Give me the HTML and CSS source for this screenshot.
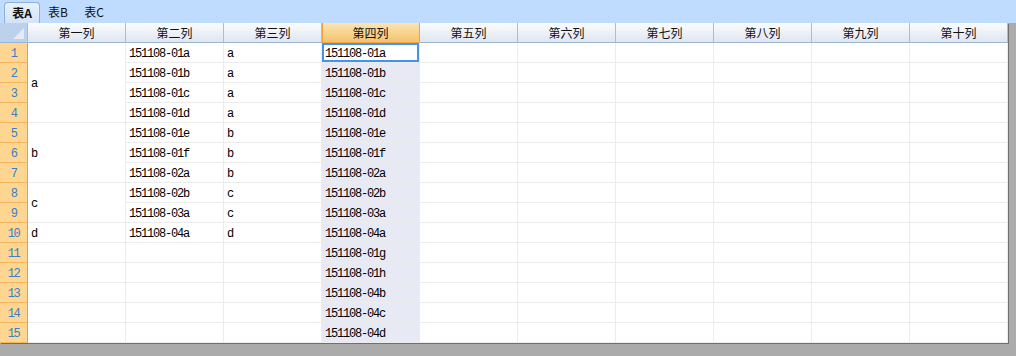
FILE: index.html
```html
<!DOCTYPE html>
<html lang="zh">

<head>
    <meta charset="UTF-8">
    <title>表格</title>
    <link rel="stylesheet" href="styles.css">
</head>

<body>
    <!-- Sheet tabs -->
    <div class="tabs">
        <span class="tab active">表A</span>
        <span class="tab">表B</span>
        <span class="tab">表C</span>
    </div>

    <div class="sheet">
        <table class="grid">
            <colgroup>
                <col class="c-head">
                <col class="c-data" span="10">
            </colgroup>
            <thead>
                <tr>
                    <th class="corner"><span class="tri"></span></th>
                    <th>第一列</th>
                    <th>第二列</th>
                    <th>第三列</th>
                    <th class="sel">第四列</th>
                    <th>第五列</th>
                    <th>第六列</th>
                    <th>第七列</th>
                    <th>第八列</th>
                    <th>第九列</th>
                    <th>第十列</th>
                </tr>
            </thead>
            <tbody>
                <tr>
                    <td class="num">1</td>
                    <td rowspan="4">a</td>
                    <td>151108-01a</td><td>a</td><td class="hl active-cell">151108-01a</td>
                    <td></td><td></td><td></td><td></td><td></td><td></td>
                </tr>
                <tr>
                    <td class="num">2</td>
                    <td>151108-01b</td><td>a</td><td class="hl">151108-01b</td>
                    <td></td><td></td><td></td><td></td><td></td><td></td>
                </tr>
                <tr>
                    <td class="num">3</td>
                    <td>151108-01c</td><td>a</td><td class="hl">151108-01c</td>
                    <td></td><td></td><td></td><td></td><td></td><td></td>
                </tr>
                <tr>
                    <td class="num">4</td>
                    <td>151108-01d</td><td>a</td><td class="hl">151108-01d</td>
                    <td></td><td></td><td></td><td></td><td></td><td></td>
                </tr>
                <tr>
                    <td class="num">5</td>
                    <td rowspan="3">b</td>
                    <td>151108-01e</td><td>b</td><td class="hl">151108-01e</td>
                    <td></td><td></td><td></td><td></td><td></td><td></td>
                </tr>
                <tr>
                    <td class="num">6</td>
                    <td>151108-01f</td><td>b</td><td class="hl">151108-01f</td>
                    <td></td><td></td><td></td><td></td><td></td><td></td>
                </tr>
                <tr>
                    <td class="num">7</td>
                    <td>151108-02a</td><td>b</td><td class="hl">151108-02a</td>
                    <td></td><td></td><td></td><td></td><td></td><td></td>
                </tr>
                <tr>
                    <td class="num">8</td>
                    <td rowspan="2">c</td>
                    <td>151108-02b</td><td>c</td><td class="hl">151108-02b</td>
                    <td></td><td></td><td></td><td></td><td></td><td></td>
                </tr>
                <tr>
                    <td class="num">9</td>
                    <td>151108-03a</td><td>c</td><td class="hl">151108-03a</td>
                    <td></td><td></td><td></td><td></td><td></td><td></td>
                </tr>
                <tr>
                    <td class="num">10</td>
                    <td>d</td>
                    <td>151108-04a</td><td>d</td><td class="hl">151108-04a</td>
                    <td></td><td></td><td></td><td></td><td></td><td></td>
                </tr>
                <tr>
                    <td class="num">11</td>
                    <td></td><td></td><td></td><td class="hl">151108-01g</td>
                    <td></td><td></td><td></td><td></td><td></td><td></td>
                </tr>
                <tr>
                    <td class="num">12</td>
                    <td></td><td></td><td></td><td class="hl">151108-01h</td>
                    <td></td><td></td><td></td><td></td><td></td><td></td>
                </tr>
                <tr>
                    <td class="num">13</td>
                    <td></td><td></td><td></td><td class="hl">151108-04b</td>
                    <td></td><td></td><td></td><td></td><td></td><td></td>
                </tr>
                <tr>
                    <td class="num">14</td>
                    <td></td><td></td><td></td><td class="hl">151108-04c</td>
                    <td></td><td></td><td></td><td></td><td></td><td></td>
                </tr>
                <tr>
                    <td class="num">15</td>
                    <td></td><td></td><td></td><td class="hl">151108-04d</td>
                    <td></td><td></td><td></td><td></td><td></td><td></td>
                </tr>
            </tbody>
        </table>
    </div>
</body>

</html>
```

FILE: styles.css
```css
/* General Styles */
* {
    margin: 0;
    padding: 0;
    box-sizing: border-box;
}

body {
    width: 1016px;
    height: 356px;
    overflow: hidden;
    background-color: #ababab;
    font-family: 'Liberation Mono', monospace;
    font-size: 12px;
    color: #000;
}

/* Sheet tabs */
.tabs {
    height: 23px;
    background-color: #bfdbfd;
    display: flex;
    align-items: flex-end;
    padding-left: 4px;
}

.tab {
    width: 36px;
    height: 21px;
    line-height: 20px;
    text-align: center;
    font-family: 'Noto Sans CJK SC', sans-serif;
    font-size: 12px;
    color: #111;
}

.tab.active {
    font-weight: bold;
    background: linear-gradient(#e9f1fb, #d3e3f8);
    border: 1px solid #8fb0da;
    border-bottom: none;
    border-radius: 4px 4px 0 0;
}

/* Grid */
.sheet {
    width: 1016px;
    height: 333px;
    background-color: #ababab;
}

.grid {
    width: 1008px;
    table-layout: fixed;
    border-collapse: separate;
    border-spacing: 0;
    background-color: #fff;
    box-shadow: 1px 1px 0 #6f6f6f;
}

.c-head {
    width: 28px;
}

.c-data {
    width: 98px;
}

.grid th,
.grid td {
    height: 20px;
    border-right: 1px solid #ececec;
    border-bottom: 1px solid #ececec;
    white-space: nowrap;
    overflow: hidden;
}

.grid th {
    font-family: 'Noto Sans CJK SC', sans-serif;
    font-weight: normal;
    font-size: 12px;
    line-height: 18px;
    color: #111;
    background: linear-gradient(#fbfcfe, #dfe6f0);
    border-right: 1px solid #a9bdd6;
    border-bottom: 1px solid #9db4d0;
}

.grid th.sel {
    background: linear-gradient(#fbe4b4, #f4c36c);
    border-right: 1px solid #f0a447;
    border-bottom: 1px solid #f0a447;
    box-shadow: inset 1px 0 0 #f0a447;
}

.grid th.corner {
    position: relative;
    background: #bcd2ec;
}

.tri {
    position: absolute;
    right: 3px;
    bottom: 3px;
    width: 0;
    height: 0;
    border-left: 11px solid transparent;
    border-bottom: 11px solid #e4ebf4;
}

.grid td {
    padding: 3px 0 0 3px;
    letter-spacing: -1.2px;
    line-height: 16px;
}

.grid td.num {
    padding-left: 0;
    text-align: center;
    color: #3b7dc6;
    letter-spacing: -1.5px;
    background-color: #fed691;
    border-right: 1px solid #f09b3a;
    border-bottom: 1px solid #f4b55f;
}

.grid td.hl {
    background-color: #e7eaf5;
}

.grid td.active-cell {
    background-color: #fff;
    box-shadow: inset 0 0 0 2px #4394ec;
}
```
